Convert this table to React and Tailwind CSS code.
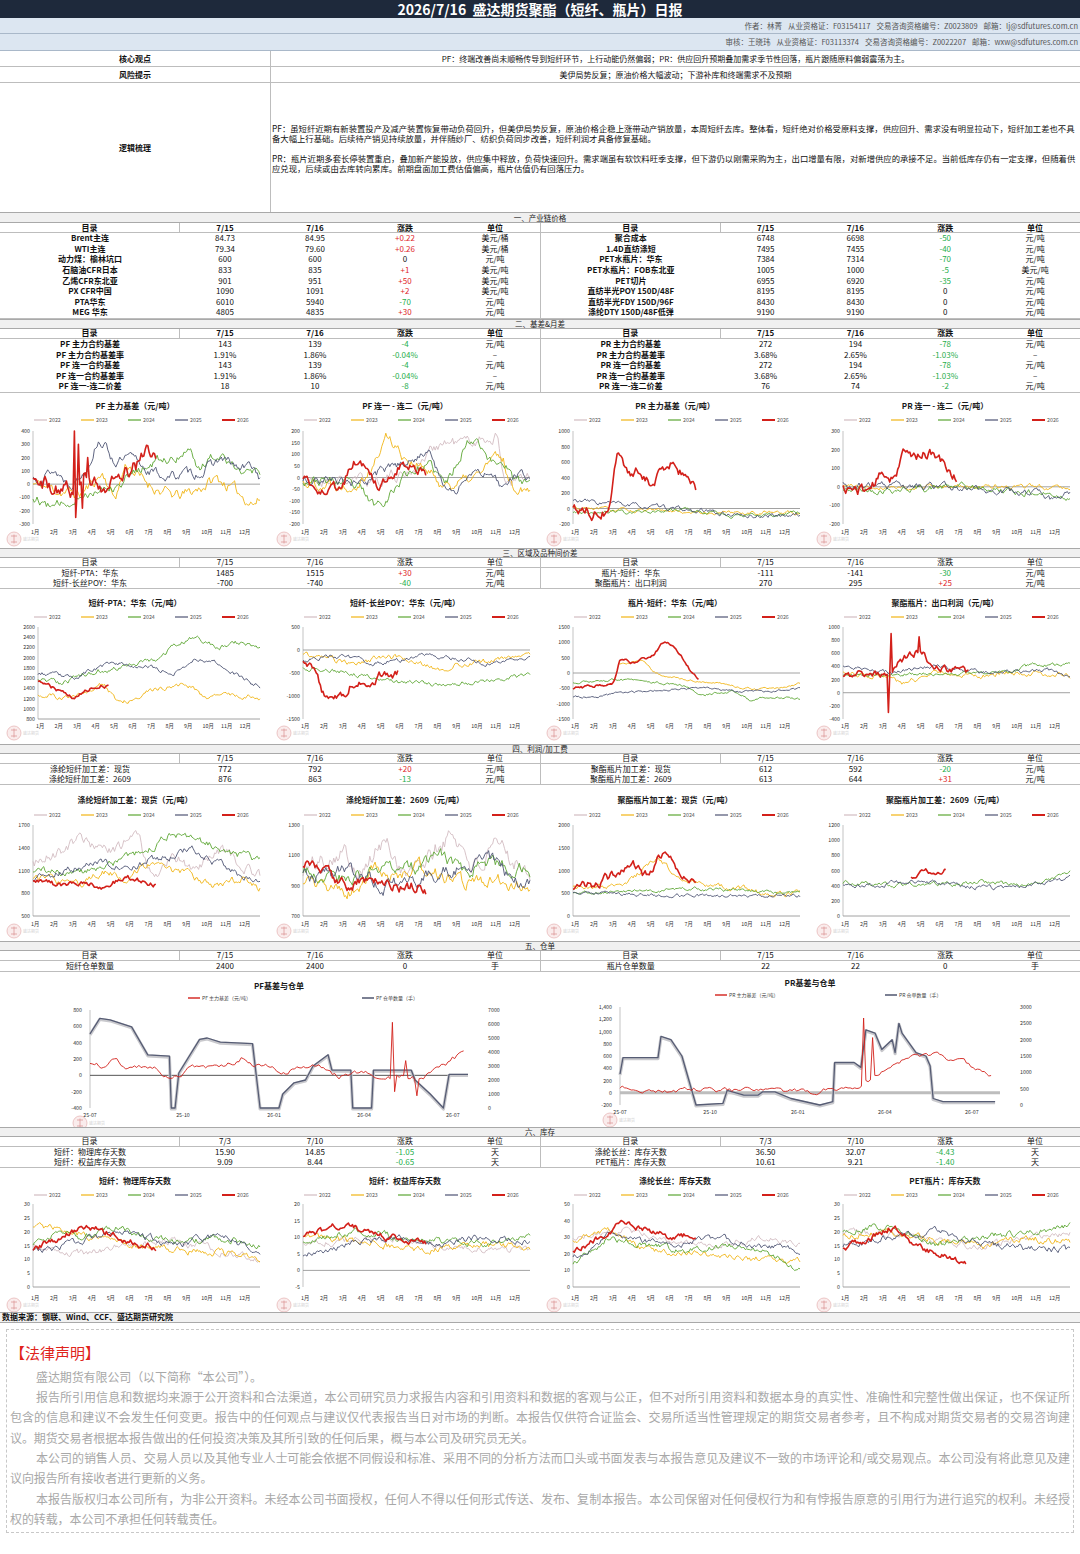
import React from "react";

const C22 = "#d2bcc2";
const C23 = "#f1b414";
const C24 = "#5ba632";
const C25 = "#4d5373";
const C26 = "#d3201a";
const YEARS = [["2022", C22], ["2023", C23], ["2024", C24], ["2025", C25], ["2026", C26]];
const MONTHS = ["1月", "2月", "3月", "4月", "5月", "6月", "7月", "8月", "9月", "10月", "11月", "12月"];

// deterministic noise so every render draws the same lines
function rng(seed) {
  let a = seed;
  return () => {
    a |= 0;
    a = (a + 0x6d2b79f5) | 0;
    let t = Math.imul(a ^ (a >>> 15), 1 | a);
    t = (t + Math.imul(t ^ (t >>> 7), 61 | t)) ^ t;
    return ((t ^ (t >>> 14)) >>> 0) / 4294967296;
  };
}

function walk(seed, anchors, vol, end = 1, spikes = [], n = 170) {
  const r = rng(seed);
  const at = (t) => {
    for (let i = 1; i < anchors.length; i++) {
      if (t <= anchors[i][0]) {
        const [a, va] = anchors[i - 1];
        const [b, vb] = anchors[i];
        return va + ((vb - va) * (t - a)) / (b - a || 1);
      }
    }
    return anchors[anchors.length - 1][1];
  };
  let v = anchors[0][1];
  const out = [];
  for (let i = Math.round(anchors[0][0] * n); i <= Math.round(end * n); i++) {
    const t = i / n;
    v += (at(t) - v) * 0.3 + (r() - 0.5) * 2 * vol;
    out.push([t, v]);
  }
  spikes.forEach(([ts, vs]) => {
    const idx = out.findIndex((p) => p[0] >= ts);
    if (idx >= 0) out[idx] = [out[idx][0], vs];
  });
  return out;
}

function Logo({ x, y }) {
  return (
    <g opacity="0.6">
      <circle cx={x} cy={y} r="7" fill="#f7e1e1" stroke="#d98b8b" strokeWidth="0.8" />
      <path d={`M${x - 3} ${y - 3}h6M${x} ${y - 4.5}v9M${x - 3} ${y + 3}h6`} stroke="#c65454" strokeWidth="0.8" fill="none" />
      <text x={x + 9} y={y + 1.5} fontSize="4" fill="#b5b5b5">盛达期货</text>
    </g>
  );
}

function Chart({ c, lay }) {
  const W = 270;
  const left = c.left || 33;
  const right = 260;
  const { h, ty, ly, top, bot, xy } = lay;
  const max = c.ticks[0];
  const min = c.ticks[c.ticks.length - 1];
  const X = (t) => left + t * (right - left);
  const Y = (v) => top + ((max - Math.max(min, Math.min(max, v))) / (max - min)) * (bot - top);
  const axisY = c.zero === false ? bot : Y(0);
  return (
    <svg width={W} height={h} className="block">
      <text x={W / 2} y={ty} textAnchor="middle" fontSize="8" fontWeight="700" fill="#1a1a1a">
        {c.title}
      </text>
      {YEARS.map(([name, col], i) => (
        <g key={name}>
          <line x1={34 + i * 47} x2={47 + i * 47} y1={ly - 2} y2={ly - 2} stroke={col} strokeWidth={name === "2026" ? 2 : 1.2} />
          <text x={49 + i * 47} y={ly} fontSize="5.3" fill="#555">{name}</text>
        </g>
      ))}
      {c.ticks.map((v) => (
        <text key={v} x={left - 3} y={Y(v) + 2} textAnchor="end" fontSize="5.3" fill="#333">{v}</text>
      ))}
      <line x1={left} x2={left} y1={top} y2={bot} stroke="#9a9a9a" strokeWidth="0.6" />
      <line x1={left} x2={right} y1={axisY} y2={axisY} stroke="#8a8a8a" strokeWidth="0.8" />
      {MONTHS.map((m, i) => (
        <text key={m} x={left + (i * (right - left)) / 12 - 2} y={xy} fontSize="5.3" fill="#333">{m}</text>
      ))}
      {c.s.map(([col, seed, anchors, vol, end, spikes], i) => {
        const pts = walk(seed, anchors, vol, end || 1, spikes || []);
        const d = pts.map((p, k) => (k ? "L" : "M") + X(p[0]).toFixed(1) + " " + Y(p[1]).toFixed(1)).join("");
        return <path key={i} d={d} fill="none" stroke={col} strokeWidth={col === C26 ? 1.6 : 0.9} strokeLinejoin="round" />;
      })}
      <Logo x={14} y={xy + 5} />
    </svg>
  );
}

const L1 = { h: 155, ty: 16, ly: 29, top: 38, bot: 131, xy: 141 };
const L2 = { h: 155, ty: 17, ly: 30, top: 38, bot: 130, xy: 139 };
const L3 = { h: 156, ty: 18, ly: 32, top: 40, bot: 131, xy: 141 };
const L4 = { h: 144, ty: 16, ly: 29, top: 36, bot: 119, xy: 132 };

const ROW1 = [
  {
    title: "PF 主力基差（元/吨）",
    ticks: [400, 300, 200, 100, 0, -100, -200, -300],
    s: [
      [C23, 11, [[0, 0], [0.1, -50], [0.2, -80], [0.3, 100], [0.35, -150], [0.4, 200], [0.45, 50], [0.55, -50], [0.62, -100], [0.7, -50], [0.8, 50], [0.9, -80], [0.97, -150], [1, -100]], 35],
      [C24, 12, [[0, -100], [0.08, -190], [0.15, -120], [0.25, -40], [0.35, 0], [0.45, 100], [0.55, 180], [0.62, 200], [0.68, 300], [0.72, 100], [0.8, 250], [0.88, 150], [0.95, 80], [1, 100]], 30],
      [C25, 13, [[0, 50], [0.08, 110], [0.15, 0], [0.22, 100], [0.28, 380], [0.35, 150], [0.42, 200], [0.5, 100], [0.58, 50], [0.65, 80], [0.72, 80], [0.82, 200], [0.9, 100], [0.96, 150], [1, 0]], 30],
      [C26, 14, [[0, 50], [0.06, 0], [0.12, -50], [0.16, -50], [0.22, 50], [0.3, 0], [0.38, 50], [0.45, 150], [0.5, 250], [0.54, 150]], 50, 0.54, [[0.18, 400], [0.185, -250], [0.2, 300], [0.215, -180], [0.24, 200]]],
    ],
  },
  {
    title: "PF 连一 - 连二（元/吨）",
    ticks: [200, 150, 100, 50, 0, -50, -100, -150, -200],
    s: [
      [C22, 21, [[0, -20], [0.3, -10], [0.45, 20], [0.52, 80], [0.58, 150], [0.7, 150], [0.85, 180], [0.87, -30], [1, 0]], 20],
      [C23, 22, [[0, -20], [0.2, -30], [0.3, 50], [0.36, 200], [0.42, 100], [0.5, 50], [0.6, -30], [0.7, -20], [0.75, 0], [0.82, 80], [0.88, 80], [0.9, -50], [1, -30]], 20],
      [C24, 23, [[0, -10], [0.15, -20], [0.25, -60], [0.3, -130], [0.38, -60], [0.45, 30], [0.55, 50], [0.62, -40], [0.7, 150], [0.76, 180], [0.82, 50], [0.88, 80], [0.92, -30], [1, -20]], 18],
      [C25, 24, [[0, -10], [0.15, -20], [0.27, -30], [0.33, 30], [0.42, 50], [0.5, 100], [0.55, 130], [0.6, -40], [0.66, -60], [0.7, -10], [0.78, 30], [0.83, -20], [0.88, -50], [0.93, 20], [1, 0]], 16],
      [C26, 25, [[0, -10], [0.08, -50], [0.12, -70], [0.18, 10], [0.22, 80], [0.28, 0], [0.33, -30], [0.38, 30], [0.45, 60], [0.5, 50], [0.54, 20]], 20, 0.54],
    ],
  },
  {
    title: "PR 主力基差（元/吨）",
    ticks: [1000, 800, 600, 400, 200, 0, -200],
    s: [
      [C23, 31, [[0, 0], [0.5, -50], [1, -50]], 20],
      [C24, 32, [[0, -50], [0.3, -50], [0.5, 0], [0.7, -100], [1, -50]], 20],
      [C25, 33, [[0, 100], [0.2, 50], [0.4, 0], [0.6, -50], [0.75, -100], [1, -80]], 25],
      [C26, 34, [[0, 0], [0.1, -50], [0.15, 0], [0.17, 400], [0.19, 850], [0.23, 300], [0.28, 500], [0.33, 350], [0.38, 450], [0.43, 650], [0.48, 400], [0.52, 250], [0.54, 150]], 60, 0.54],
    ],
  },
  {
    title: "PR 连一 - 连二（元/吨）",
    ticks: [300, 200, 100, 0, -100, -200],
    s: [
      [C23, 41, [[0, 0], [1, 0]], 10],
      [C24, 42, [[0, -20], [0.5, 0], [1, -50]], 15],
      [C25, 43, [[0, 10], [0.3, 0], [0.6, -10], [0.85, -40], [0.9, -80], [1, -30]], 15],
      [C26, 44, [[0, -10], [0.1, -20], [0.17, 80], [0.22, 50], [0.25, 200], [0.3, 150], [0.35, 200], [0.4, 150], [0.45, 100], [0.5, 30]], 25, 0.5],
    ],
  },
];

const ROW2 = [
  {
    title: "短纤-PTA：华东（元/吨）",
    ticks: [2600, 2400, 2200, 2000, 1800, 1600, 1400, 1200, 1000, 800],
    zero: false,
    left: 38,
    s: [
      [C23, 51, [[0, 1300], [0.1, 1200], [0.2, 1300], [0.28, 1500], [0.35, 1100], [0.45, 1300], [0.55, 1400], [0.65, 1500], [0.75, 1200], [0.85, 1300], [1, 1200]], 40],
      [C24, 52, [[0, 1600], [0.1, 1500], [0.2, 1700], [0.35, 1800], [0.45, 1900], [0.55, 2000], [0.6, 2300], [0.7, 2400], [0.8, 2200], [0.9, 2300], [1, 2200]], 40],
      [C25, 53, [[0, 1700], [0.15, 1600], [0.25, 1800], [0.35, 1900], [0.5, 1800], [0.6, 1700], [0.7, 2000], [0.8, 1900], [0.9, 1600], [1, 1400]], 35],
      [C26, 54, [[0, 1550], [0.05, 1400], [0.1, 1300], [0.15, 1200], [0.22, 1400], [0.28, 1500], [0.32, 1450]], 35, 0.32],
    ],
  },
  {
    title: "短纤-长丝POY：华东（元/吨）",
    ticks: [500, 0, -500, -1000, -1500],
    s: [
      [C23, 61, [[0, -100], [0.2, -300], [0.3, -200], [0.4, -150], [0.5, -300], [0.6, -400], [0.7, -300], [0.8, -250], [0.9, -200], [1, -100]], 50],
      [C24, 62, [[0, -400], [0.2, -500], [0.3, -600], [0.4, -700], [0.5, -700], [0.6, -800], [0.7, -700], [0.8, -700], [0.9, -600], [1, -550]], 40],
      [C25, 63, [[0, -200], [0.1, -100], [0.2, -200], [0.3, -300], [0.45, -200], [0.55, -100], [0.7, -200], [0.8, -300], [0.9, -200], [1, -100]], 40],
      [C26, 64, [[0, -300], [0.05, -600], [0.08, -1000], [0.12, -1200], [0.18, -900], [0.22, -600], [0.28, -700], [0.35, -500], [0.4, -500]], 80, 0.42],
    ],
  },
  {
    title: "瓶片-短纤：华东（元/吨）",
    ticks: [1500, 1000, 500, 0, -500, -1000, -1500],
    s: [
      [C23, 71, [[0.2, 300], [0.3, 400], [0.35, 0], [0.4, -100], [0.5, -250], [0.6, -300], [0.7, -450], [0.8, -550], [0.9, -500], [1, -300]], 30],
      [C24, 72, [[0, -300], [0.1, -250], [0.2, -200], [0.3, -300], [0.4, -350], [0.5, -450], [0.55, -800], [0.6, -650], [0.7, -600], [0.75, -800], [0.78, -1000], [0.83, -750], [0.9, -800], [1, -850]], 30],
      [C25, 73, [[0, -800], [0.1, -750], [0.2, -650], [0.3, -600], [0.45, -500], [0.55, -500], [0.7, -600], [0.85, -600], [1, -500]], 30],
      [C26, 74, [[0, -500], [0.1, -400], [0.18, -300], [0.2, 700], [0.25, 300], [0.3, 500], [0.35, 600], [0.38, 1050], [0.42, 900], [0.48, 400], [0.52, -150], [0.55, -200]], 40, 0.55],
    ],
  },
  {
    title: "聚酯瓶片：出口利润（元/吨）",
    ticks: [1000, 800, 600, 400, 200, 0, -200, -400],
    s: [
      [C23, 81, [[0, 300], [0.2, 250], [0.25, 100], [0.3, 200], [0.4, 300], [0.5, 300], [0.6, 250], [0.7, 300], [0.85, 300], [1, 250]], 30],
      [C24, 82, [[0, 250], [0.2, 280], [0.4, 300], [0.6, 280], [0.75, 350], [0.85, 450], [0.9, 400], [1, 420]], 25],
      [C25, 83, [[0, 400], [0.1, 350], [0.2, 300], [0.28, 350], [0.35, 400], [0.5, 350], [0.65, 300], [0.8, 330], [0.9, 350], [1, 220]], 25],
      [C26, 84, [[0, 250], [0.1, 300], [0.18, 250], [0.22, 400], [0.25, 500], [0.3, 600], [0.33, 650], [0.37, 450], [0.42, 350], [0.5, 350], [0.55, 280]], 45, 0.55, [[0.2, -300], [0.21, 900], [0.33, 850]]],
    ],
  },
];

const ROW3 = [
  {
    title: "涤纶短纤加工差：现货（元/吨）",
    ticks: [1700, 1400, 1100, 800, 500],
    zero: false,
    s: [
      [C22, 91, [[0, 1200], [0.2, 1500], [0.3, 1300], [0.45, 1600], [0.5, 1000], [0.6, 1300], [0.7, 1100], [0.8, 1400], [0.9, 1200], [1, 1000]], 60],
      [C23, 92, [[0, 1000], [0.2, 900], [0.3, 1100], [0.4, 1000], [0.5, 1200], [0.6, 1100], [0.7, 1000], [0.8, 900], [0.9, 1000], [1, 850]], 40],
      [C24, 93, [[0, 1100], [0.2, 1050], [0.35, 1200], [0.5, 1400], [0.6, 1600], [0.7, 1500], [0.8, 1400], [0.9, 1300], [1, 1200]], 40],
      [C25, 94, [[0, 1000], [0.2, 1150], [0.3, 1200], [0.4, 1100], [0.5, 1250], [0.6, 1300], [0.7, 1400], [0.85, 1100], [1, 950]], 40],
      [C26, 95, [[0, 950], [0.1, 900], [0.2, 950], [0.3, 900], [0.4, 1000], [0.5, 950], [0.54, 900]], 30, 0.54],
    ],
  },
  {
    title: "涤纶短纤加工差：2609（元/吨）",
    ticks: [1300, 1100, 900, 700],
    zero: false,
    s: [
      [C22, 101, [[0, 1000], [0.15, 1150], [0.25, 1000], [0.35, 1200], [0.45, 950], [0.55, 1100], [0.65, 1250], [0.75, 1000], [0.85, 1150], [1, 1000]], 50],
      [C23, 102, [[0, 900], [0.2, 850], [0.3, 1000], [0.4, 950], [0.5, 1050], [0.6, 950], [0.7, 900], [0.8, 950], [1, 900]], 35],
      [C24, 103, [[0, 1000], [0.2, 950], [0.35, 1050], [0.5, 1000], [0.6, 1100], [0.7, 1000], [0.8, 1050], [1, 1000]], 35],
      [C25, 104, [[0, 950], [0.2, 1000], [0.35, 900], [0.5, 950], [0.65, 1000], [0.8, 1100], [0.9, 950], [1, 900]], 35],
      [C26, 105, [[0, 1050], [0.1, 950], [0.2, 900], [0.3, 950], [0.4, 880], [0.5, 920], [0.54, 870]], 30, 0.54],
    ],
  },
  {
    title: "聚酯瓶片加工差：现货（元/吨）",
    ticks: [2000, 1500, 1000, 500, 0],
    zero: false,
    s: [
      [C23, 111, [[0, 600], [0.2, 700], [0.3, 1000], [0.35, 1300], [0.45, 900], [0.55, 700], [0.7, 600], [0.85, 500], [1, 500]], 50],
      [C24, 112, [[0, 500], [0.5, 600], [1, 500]], 30],
      [C25, 113, [[0, 500], [0.5, 450], [1, 450]], 30],
      [C26, 114, [[0, 600], [0.1, 700], [0.2, 1000], [0.25, 1300], [0.3, 800], [0.35, 1200], [0.4, 1500], [0.45, 1000], [0.5, 800], [0.54, 700]], 80, 0.54],
    ],
  },
  {
    title: "聚酯瓶片加工差：2609（元/吨）",
    ticks: [1200, 1000, 800, 600, 400, 200, 0],
    zero: false,
    s: [
      [C24, 121, [[0, 450], [0.3, 400], [0.6, 450], [0.8, 400], [0.9, 500], [1, 600]], 25],
      [C25, 122, [[0, 400], [0.3, 450], [0.5, 400], [0.7, 350], [0.85, 450], [1, 500]], 25],
      [C26, 123, [[0.3, 500], [0.35, 600], [0.4, 550], [0.45, 650]], 25, 0.45],
    ],
  },
];

const ROW4 = [
  {
    title: "短纤：物理库存天数",
    ticks: [30, 25, 20, 15, 10, 5, 0],
    s: [
      [C22, 131, [[0, 15], [0.2, 12], [0.4, 15], [0.6, 17], [0.8, 13], [1, 10]], 1],
      [C23, 132, [[0, 22], [0.15, 20], [0.3, 17], [0.5, 14], [0.7, 13], [0.85, 12], [1, 10]], 1],
      [C24, 133, [[0, 15], [0.1, 20], [0.2, 18], [0.35, 22], [0.5, 18], [0.65, 16], [0.8, 18], [1, 15]], 1],
      [C25, 134, [[0, 13], [0.2, 16], [0.35, 20], [0.5, 18], [0.6, 15], [0.8, 18], [0.9, 16], [1, 12]], 1],
      [C26, 135, [[0, 14], [0.1, 18], [0.2, 22], [0.3, 20], [0.4, 17], [0.5, 15], [0.54, 14.8]], 1, 0.54],
    ],
  },
  {
    title: "短纤：权益库存天数",
    ticks: [20, 15, 10, 5, 0, -5],
    s: [
      [C22, 141, [[0, 8], [0.3, 10], [0.6, 7], [1, 6]], 0.8],
      [C23, 142, [[0, 10], [0.3, 8], [0.5, 6], [0.7, 8], [1, 7]], 0.8],
      [C24, 143, [[0, 8], [0.2, 12], [0.4, 10], [0.6, 9], [0.8, 8], [1, 10]], 0.8],
      [C25, 144, [[0, 5], [0.2, 8], [0.4, 10], [0.6, 8], [0.8, 10], [1, 8]], 0.8],
      [C26, 145, [[0, 10], [0.15, 14], [0.3, 11], [0.45, 9], [0.54, 8.4]], 0.8, 0.54],
    ],
  },
  {
    title: "涤纶长丝：库存天数",
    ticks: [50, 40, 30, 20, 10, 0],
    s: [
      [C22, 151, [[0, 30], [0.2, 35], [0.4, 28], [0.6, 25], [0.8, 30], [1, 25]], 1.5],
      [C23, 152, [[0, 28], [0.15, 35], [0.3, 22], [0.5, 20], [0.7, 18], [1, 15]], 1.5],
      [C24, 153, [[0, 15], [0.15, 30], [0.3, 25], [0.5, 22], [0.7, 25], [0.85, 20], [1, 10]], 1.5],
      [C25, 154, [[0, 18], [0.15, 32], [0.3, 28], [0.45, 25], [0.6, 30], [0.8, 25], [1, 22]], 1.5],
      [C26, 155, [[0, 22], [0.1, 30], [0.2, 38], [0.3, 35], [0.4, 30], [0.54, 32]], 1.5, 0.54],
    ],
  },
  {
    title: "PET瓶片：库存天数",
    ticks: [30, 25, 20, 15, 10, 5, 0],
    s: [
      [C22, 161, [[0, 20], [0.3, 18], [0.6, 15], [1, 20]], 1],
      [C23, 162, [[0, 18], [0.2, 20], [0.4, 17], [0.6, 15], [0.8, 18], [1, 16]], 1],
      [C24, 163, [[0, 20], [0.2, 22], [0.4, 15], [0.6, 18], [0.8, 20], [1, 22]], 1],
      [C25, 164, [[0, 15], [0.2, 18], [0.4, 20], [0.6, 16], [0.8, 14], [1, 13]], 1],
      [C26, 165, [[0, 14], [0.1, 18], [0.2, 22], [0.3, 16], [0.4, 12], [0.5, 10], [0.54, 9.2]], 1, 0.54],
    ],
  },
];

const PF_BIG = {
  title: "PF基差与仓单",
  names: ["PF 主力基差（元/吨）", "PF 仓单数量（手）"],
  legX: [188, 362],
  l: 90, r: 468, top: 38, bot: 136, ty: 17, ly: 28, xy: 145,
  lt: [800, 600, 400, 200, 0, -200, -400],
  rt: [7000, 6000, 5000, 4000, 3000, 2000, 1000, 0],
  xl: [["25-07", 0], ["25-10", 0.246], ["26-01", 0.487], ["26-04", 0.725], ["26-07", 0.96]],
  basis: walk(201, [[0, 150], [0.03, 100], [0.05, 200], [0.08, 100], [0.15, 120], [0.18, 20], [0.2, -50], [0.25, 100], [0.35, 120], [0.4, 250], [0.43, 100], [0.5, 60], [0.6, 100], [0.64, -20], [0.7, 0], [0.75, 20], [0.78, -50], [0.8, -20], [0.85, -50], [0.9, 20], [0.93, 150], [0.96, 250], [0.98, 300], [1, 150]], 30, 0.99, [[0.8, 650], [0.805, -200], [0.83, 180], [0.86, -250]]),
  steps: [[0, 5300], [0.026, 6400], [0.053, 6300], [0.11, 5800], [0.153, 3800], [0.21, 3700], [0.215, 0], [0.225, 0], [0.235, 2500], [0.29, 4900], [0.31, 5000], [0.345, 4700], [0.43, 4600], [0.45, 0], [0.5, 0], [0.51, 1000], [0.54, 1800], [0.57, 2000], [0.59, 3000], [0.63, 3800], [0.64, 2700], [0.69, 2700], [0.695, 0], [0.745, 0], [0.75, 2700], [0.85, 2700], [0.86, 2000], [0.9, 1000], [0.935, 0], [0.95, 2400], [1, 2400]],
  fmt: (v) => String(v),
  thick: false,
};

const PR_BIG = {
  title: "PR基差与仓单",
  names: ["PR 主力基差（元/吨）", "PR 仓单数量（手）"],
  legX: [175, 345],
  l: 80, r: 460, top: 35, bot: 133, ty: 14, ly: 25, xy: 142,
  lt: [1400, 1200, 1000, 800, 600, 400, 200, 0, -200],
  rt: [3000, 2500, 2000, 1500, 1000, 500, 0],
  xl: [["25-07", 0], ["25-10", 0.237], ["26-01", 0.468], ["26-04", 0.697], ["26-07", 0.926]],
  basis: walk(202, [[0, 100], [0.02, 60], [0.1, 30], [0.2, 50], [0.3, 30], [0.4, 20], [0.5, 0], [0.55, 100], [0.6, 80], [0.63, 100], [0.66, 300], [0.7, 500], [0.75, 550], [0.8, 650], [0.85, 550], [0.9, 450], [0.95, 350], [0.975, 200]], 35, 0.975, [[0.64, 1220], [0.645, 200], [0.66, 900]]),
  steps: [[0, 950], [0.008, 1450], [0.1, 1450], [0.108, 2100], [0.134, 2000], [0.163, 1500], [0.2, 0], [0.271, 50], [0.282, 450], [0.326, 300], [0.363, 300], [0.375, 400], [0.408, 400], [0.45, 200], [0.526, 0], [0.56, 100], [0.565, 1300], [0.616, 1300], [0.634, 1150], [0.647, 2300], [0.671, 2200], [0.689, 1700], [0.716, 2000], [0.724, 1600], [0.734, 2500], [0.742, 2200], [0.779, 1600], [0.805, 1500], [0.816, 1200], [0.824, 200], [0.85, 100], [0.987, 100]],
  fmt: (v) => v.toLocaleString("en-US"),
  thick: true,
};

function BigChart({ c }) {
  const W = 540;
  const lmax = c.lt[0];
  const lmin = c.lt[c.lt.length - 1];
  const rmax = c.rt[0];
  const rmin = c.rt[c.rt.length - 1];
  const X = (t) => c.l + t * (c.r - c.l);
  const YL = (v) => c.top + ((lmax - Math.max(lmin, Math.min(lmax, v))) / (lmax - lmin)) * (c.bot - c.top);
  const YR = (v) => c.top + ((rmax - v) / (rmax - rmin)) * (c.bot - c.top);
  const bd = c.basis.map((p, k) => (k ? "L" : "M") + X(p[0]).toFixed(1) + " " + YL(p[1]).toFixed(1)).join("");
  const sd = c.steps.map((p, k) => (k ? "L" : "M") + X(p[0]).toFixed(1) + " " + YR(p[1]).toFixed(1)).join("");
  return (
    <svg width={W} height={155} className="block">
      <text x={(c.l + c.r) / 2} y={c.ty} textAnchor="middle" fontSize="8" fontWeight="700" fill="#1a1a1a">{c.title}</text>
      <line x1={c.legX[0]} x2={c.legX[0] + 12} y1={c.ly - 2} y2={c.ly - 2} stroke={C26} strokeWidth="1.4" />
      <text x={c.legX[0] + 14} y={c.ly} fontSize="5" fill="#444">{c.names[0]}</text>
      <line x1={c.legX[1]} x2={c.legX[1] + 12} y1={c.ly - 2} y2={c.ly - 2} stroke="#5b6178" strokeWidth="1.6" />
      <text x={c.legX[1] + 14} y={c.ly} fontSize="5" fill="#444">{c.names[1]}</text>
      {c.lt.map((v) => (
        <text key={v} x={c.l - 8} y={YL(v) + 2} textAnchor="end" fontSize="5.3" fill="#333">{c.fmt(v)}</text>
      ))}
      {c.rt.map((v) => (
        <text key={v} x={c.r + 20} y={YR(v) + 2} textAnchor="start" fontSize="5.3" fill="#333">{v}</text>
      ))}
      <line x1={c.l} x2={c.l} y1={c.top} y2={c.bot} stroke="#9a9a9a" strokeWidth="0.6" />
      {c.thick ? (
        <line x1={c.l} x2={c.r} y1={YL(0)} y2={YL(0)} stroke="#bdbdbd" strokeWidth="3" />
      ) : (
        <line x1={c.l} x2={c.r} y1={YL(0)} y2={YL(0)} stroke="#555" strokeWidth="1" />
      )}
      {c.xl.map(([lab, t]) => (
        <text key={lab} x={X(t)} y={c.xy} textAnchor="middle" fontSize="5.3" fill="#333">{lab}</text>
      ))}
      <path d={sd} fill="none" stroke="#c9c9cd" strokeWidth="3.2" transform="translate(0 1)" strokeLinejoin="round" />
      <path d={sd} fill="none" stroke="#565c74" strokeWidth="1.3" strokeLinejoin="round" />
      <path d={bd} fill="none" stroke={C26} strokeWidth="0.9" strokeLinejoin="round" />
      <Logo x={c.l - 10} y={c.xy + 6} />
    </svg>
  );
}

function ChartRow({ charts, lay }) {
  return (
    <div className="flex bg-white">
      {charts.map((c) => (
        <Chart key={c.title} c={c} lay={lay} />
      ))}
    </div>
  );
}

const tone = (v) =>
  v.startsWith("+") ? "text-[#e0262a]" : v.startsWith("-") ? "text-[#1fae4a]" : "text-[#111]";

function Half({ rows, d1, d2, rowH, bold, right }) {
  return (
    <div className={right ? "border-l border-[#bdbdbd]" : ""}>
      <div className={`grid grid-cols-[2fr_1fr_1fr_1fr_1fr] h-[10px] border-b border-[#bdbdbd] ${bold ? "font-bold" : ""}`}>
        {["目录", d1, d2, "涨跌", "单位"].map((h, i) => (
          <div key={i} className={`flex items-center justify-center ${i === 0 ? "border-r border-[#bdbdbd]" : ""}`}>
            {h}
          </div>
        ))}
      </div>
      {rows.map((r) => (
        <div key={r[0]} className={`grid grid-cols-[2fr_1fr_1fr_1fr_1fr] ${rowH}`}>
          <div className={`flex items-center justify-center ${bold ? "font-bold" : ""}`}>{r[0]}</div>
          <div className="flex items-center justify-center">{r[1]}</div>
          <div className="flex items-center justify-center">{r[2]}</div>
          <div className={`flex items-center justify-center ${tone(r[3])}`}>{r[3]}</div>
          <div className="flex items-center justify-center">{r[4]}</div>
        </div>
      ))}
    </div>
  );
}

function Table({ left, right, d1 = "7/15", d2 = "7/16", rowH = "h-[10px]", bold }) {
  return (
    <div className="grid grid-cols-2 text-[8px] leading-none text-[#111] border-b border-[#bdbdbd]">
      <Half rows={left} d1={d1} d2={d2} rowH={rowH} bold={bold} />
      <Half rows={right} d1={d1} d2={d2} rowH={rowH} bold={bold} right />
    </div>
  );
}

function Section({ children, h = "h-[10px]" }) {
  return (
    <div className={`${h} flex items-center justify-center bg-[#f0f0f0] border-y border-[#a9a9a9] text-[7.5px] leading-none text-[#222]`}>
      {children}
    </div>
  );
}

const T1L = [
  ["Brent主连", "84.73", "84.95", "+0.22", "美元/桶"],
  ["WTI主连", "79.34", "79.60", "+0.26", "美元/桶"],
  ["动力煤：榆林坑口", "600", "600", "0", "元/吨"],
  ["石脑油CFR日本", "833", "835", "+1", "美元/吨"],
  ["乙烯CFR东北亚", "901", "951", "+50", "美元/吨"],
  ["PX CFR中国", "1090", "1091", "+2", "美元/吨"],
  ["PTA华东", "6010", "5940", "-70", "元/吨"],
  ["MEG 华东", "4805", "4835", "+30", "元/吨"],
];
const T1R = [
  ["聚合成本", "6748", "6698", "-50", "元/吨"],
  ["1.4D直纺涤短", "7495", "7455", "-40", "元/吨"],
  ["PET水瓶片：华东", "7384", "7314", "-70", "元/吨"],
  ["PET水瓶片：FOB东北亚", "1005", "1000", "-5", "美元/吨"],
  ["PET切片", "6955", "6920", "-35", "元/吨"],
  ["直纺半光POY 150D/48F", "8195", "8195", "0", "元/吨"],
  ["直纺半光FDY 150D/96F", "8430", "8430", "0", "元/吨"],
  ["涤纶DTY 150D/48F低弹", "9190", "9190", "0", "元/吨"],
];
const T2L = [
  ["PF 主力合约基差", "143", "139", "-4", "元/吨"],
  ["PF 主力合约基差率", "1.91%", "1.86%", "-0.04%", "–"],
  ["PF 连一合约基差", "143", "139", "-4", "元/吨"],
  ["PF 连一合约基差率", "1.91%", "1.86%", "-0.04%", "–"],
  ["PF 连一-连二价差", "18", "10", "-8", "元/吨"],
];
const T2R = [
  ["PR 主力合约基差", "272", "194", "-78", "元/吨"],
  ["PR 主力合约基差率", "3.68%", "2.65%", "-1.03%", "–"],
  ["PR 连一合约基差", "272", "194", "-78", "元/吨"],
  ["PR 连一合约基差率", "3.68%", "2.65%", "-1.03%", "–"],
  ["PR 连一-连二价差", "76", "74", "-2", "元/吨"],
];

const LEGAL = [
  "盛达期货有限公司（以下简称“本公司”）。",
  "报告所引用信息和数据均来源于公开资料和合法渠道，本公司研究员力求报告内容和引用资料和数据的客观与公正，但不对所引用资料和数据本身的真实性、准确性和完整性做出保证，也不保证所包含的信息和建议不会发生任何变更。报告中的任何观点与建议仅代表报告当日对市场的判断。本报告仅供符合证监会、交易所适当性管理规定的期货交易者参考，且不构成对期货交易者的交易咨询建议。期货交易者根据本报告做出的任何投资决策及其所引致的任何后果，概与本公司及研究员无关。",
  "本公司的销售人员、交易人员以及其他专业人士可能会依据不同假设和标准、采用不同的分析方法而口头或书面发表与本报告意见及建议不一致的市场评论和/或交易观点。本公司没有将此意见及建议向报告所有接收者进行更新的义务。",
  "本报告版权归本公司所有，为非公开资料。未经本公司书面授权，任何人不得以任何形式传送、发布、复制本报告。本公司保留对任何侵权行为和有悖报告原意的引用行为进行追究的权利。未经授权的转载，本公司不承担任何转载责任。",
];

export default function App() {
  return (
    <div className="w-[1080px] h-[1554px] bg-white overflow-hidden font-['Noto_Sans_CJK_SC','Noto_Sans',sans-serif] text-[#111]">
      <div className="h-[18px] bg-[#1e293b] flex items-center justify-center text-white text-[14px] font-bold leading-none">
        2026/7/16&nbsp;&nbsp;盛达期货聚酯（短纤、瓶片）日报
      </div>
      <div className="h-[16px] bg-[#dce6f1] border-b border-[#a9b8c9] flex items-center justify-end gap-[6px] pr-[2px] text-[7.5px] text-[#555] leading-none">
        <span>作者：林菁</span>
        <span>从业资格证：F03154117</span>
        <span>交易咨询资格编号：Z0023809</span>
        <span>邮箱：lj@sdfutures.com.cn</span>
      </div>
      <div className="h-[17px] bg-[#dce6f1] border-b border-[#a9b8c9] flex items-center justify-end gap-[6px] pr-[2px] text-[7.5px] text-[#555] leading-none">
        <span>审核：王晓玮</span>
        <span>从业资格证：F03113374</span>
        <span>交易咨询资格编号：Z0022207</span>
        <span>邮箱：wxw@sdfutures.com.cn</span>
      </div>
      <div className="grid grid-cols-[271px_1fr] text-[8px] leading-none">
        <div className="h-[16px] flex items-center justify-center font-bold border-r border-b border-[#bdbdbd]">核心观点</div>
        <div className="h-[16px] flex items-center justify-center border-b border-[#bdbdbd]">
          PF：终端改善尚未顺畅传导到短纤环节，上行动能仍然偏弱；PR：供应回升预期叠加需求季节性回落，瓶片跟随原料偏弱震荡为主。
        </div>
        <div className="h-[16px] flex items-center justify-center font-bold border-r border-b border-[#bdbdbd]">风险提示</div>
        <div className="h-[16px] flex items-center justify-center border-b border-[#bdbdbd]">
          美伊局势反复；原油价格大幅波动；下游补库和终端需求不及预期
        </div>
        <div className="h-[129px] flex items-center justify-center font-bold border-r border-[#bdbdbd]">逻辑梳理</div>
        <div className="h-[129px] flex flex-col justify-center gap-[10px] px-[1px] text-[8.35px] leading-[10px]">
          <p>
            PF：虽短纤近期有新装置投产及减产装置恢复带动负荷回升，但美伊局势反复，原油价格企稳上涨带动产销放量，本周短纤去库。整体看，短纤绝对价格受原料支撑，供应回升、需求没有明显拉动下，短纤加工差也不具备大幅上行基础。后续待产销见持续放量，并伴随纱厂、纺织负荷同步改善，短纤利润才具备修复基础。
          </p>
          <p>
            PR：瓶片近期多套长停装置重启，叠加新产能投放，供应集中释放，负荷快速回升。需求端虽有软饮料旺季支撑，但下游仍以刚需采购为主，出口增量有限，对新增供应的承接不足。当前低库存仍有一定支撑，但随着供应兑现，后续或由去库转向累库。前期盘面加工费估值偏高，瓶片估值仍有回落压力。
          </p>
        </div>
      </div>

      <Section h="h-[11px]">一、产业链价格</Section>
      <Table left={T1L} right={T1R} rowH="h-[10.6px]" bold />
      <Section>二、基差&amp;月差</Section>
      <Table left={T2L} right={T2R} rowH="h-[10.6px]" bold />
      <ChartRow charts={ROW1} lay={L1} />

      <Section>三、区域及品种间价差</Section>
      <Table
        left={[["短纤-PTA：华东", "1485", "1515", "+30", "元/吨"], ["短纤-长丝POY：华东", "-700", "-740", "-40", "元/吨"]]}
        right={[["瓶片-短纤：华东", "-111", "-141", "-30", "元/吨"], ["聚酯瓶片：出口利润", "270", "295", "+25", "元/吨"]]}
      />
      <ChartRow charts={ROW2} lay={L2} />

      <Section>四、利润/加工费</Section>
      <Table
        left={[["涤纶短纤加工差：现货", "772", "792", "+20", "元/吨"], ["涤纶短纤加工差：2609", "876", "863", "-13", "元/吨"]]}
        right={[["聚酯瓶片加工差：现货", "612", "592", "-20", "元/吨"], ["聚酯瓶片加工差：2609", "613", "644", "+31", "元/吨"]]}
      />
      <ChartRow charts={ROW3} lay={L3} />

      <Section>五、仓单</Section>
      <Table left={[["短纤仓单数量", "2400", "2400", "0", "手"]]} right={[["瓶片仓单数量", "22", "22", "0", "手"]]} />
      <div className="flex bg-white">
        <BigChart c={PF_BIG} />
        <BigChart c={PR_BIG} />
      </div>

      <Section>六、库存</Section>
      <Table
        d1="7/3"
        d2="7/10"
        left={[["短纤：物理库存天数", "15.90", "14.85", "-1.05", "天"], ["短纤：权益库存天数", "9.09", "8.44", "-0.65", "天"]]}
        right={[["涤纶长丝：库存天数", "36.50", "32.07", "-4.43", "天"], ["PET瓶片：库存天数", "10.61", "9.21", "-1.40", "天"]]}
      />
      <ChartRow charts={ROW4} lay={L4} />

      <div className="h-[11px] flex items-center pl-[2px] bg-[#f2f2f2] border-y border-[#a9a9a9] text-[8px] leading-none font-bold">
        数据来源：钢联、Wind、CCF、盛达期货研究院
      </div>
      <div className="h-[237px] pt-[6px] border-b border-[#a9a9a9]">
        <div className="mx-[6px] h-[204px] border border-dashed border-[#c8c8c8] px-[3px] pt-[13px]">
          <div className="text-[15px] leading-[20px] text-[#e0241b]">【法律声明】</div>
          <div className="mt-[4px] text-[12px] leading-[20.3px] text-[#a8a8a8] tracking-[-0.1px]">
            {LEGAL.map((p) => (
              <p key={p.slice(0, 8)} className="indent-[26px] text-justify">{p}</p>
            ))}
          </div>
        </div>
      </div>
    </div>
  );
}
